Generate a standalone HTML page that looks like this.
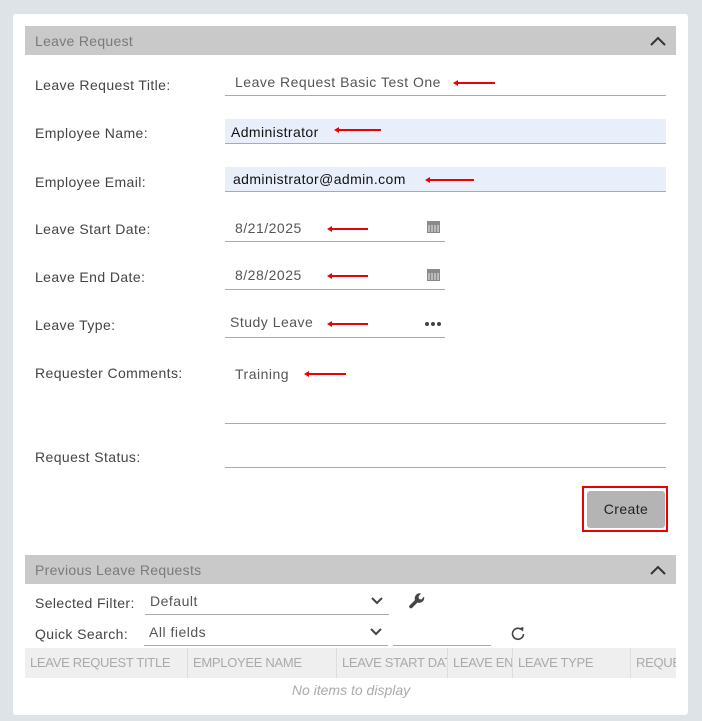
<!DOCTYPE html>
<html><head><style>
body{margin:0;width:702px;height:721px;background:#dde3e7;font-family:"Liberation Sans",sans-serif;position:relative;overflow:hidden}
.card{position:absolute;left:13px;top:14px;width:675px;height:701px;background:#fff;border-radius:3px}
.a{position:absolute;white-space:nowrap}
.hdr{position:absolute;left:25px;width:651px;height:29px;background:#c9c9c9}
.hdr span{position:absolute;left:10px;top:7px;font-size:14px;color:#7a7a7a;letter-spacing:0.3px}
.lbl{font-size:14px;color:#444;letter-spacing:0.4px}
.val{font-size:14px;color:#555;letter-spacing:0.5px}
.ln{position:absolute;height:1px;background:#aaa}
.arr{position:absolute;height:2px;background:#e00}
.arr:before{content:"";position:absolute;left:-3px;top:-2px;border-right:5px solid #e00;border-top:3px solid transparent;border-bottom:3px solid transparent}
.blue{position:absolute;background:#e8effa}
.cal{position:absolute;width:13px;height:12px;background:#8a8a8a}
.cal:after{content:"";position:absolute;left:1px;top:4px;width:11px;height:7px;background:repeating-linear-gradient(90deg,#bbb 0 2px,#8a8a8a 2px 3px)}
.th{position:absolute;top:648px;height:30px;background:#efefef;font-size:13px;color:#aaa;line-height:30px;overflow:hidden;white-space:nowrap;border-right:1px solid #ddd;padding-left:5px;box-sizing:border-box;letter-spacing:-0.3px}
.dot{position:absolute;width:4px;height:4px;border-radius:50%;background:#444}
</style></head><body>
<div class="card"></div>
<div class="hdr" style="top:26px"><span>Leave Request</span>
<svg style="position:absolute;left:624px;top:9px" width="18" height="12"><path d="M2 10 L9 3 L16 10" stroke="#333" stroke-width="2" fill="none"/></svg></div>

<div class="a lbl" style="left:35px;top:77px">Leave Request Title:</div>
<div class="a val" style="left:235px;top:74px">Leave Request Basic Test One</div>
<div class="arr" style="left:456px;top:82px;width:39px"></div>
<div class="ln" style="left:225px;top:95px;width:441px"></div>

<div class="blue" style="left:225px;top:119px;width:441px;height:24px"></div>
<div class="a lbl" style="left:35px;top:125px">Employee Name:</div>
<div class="a" style="left:231px;top:124px;font-size:14px;color:#111;letter-spacing:0.4px">Administrator</div>
<div class="arr" style="left:337px;top:129px;width:44px"></div>
<div class="ln" style="left:225px;top:143px;width:441px"></div>

<div class="blue" style="left:225px;top:167px;width:441px;height:24px"></div>
<div class="a lbl" style="left:35px;top:174px">Employee Email:</div>
<div class="a" style="left:233px;top:171px;font-size:14px;color:#111;letter-spacing:0.4px">administrator@admin.com</div>
<div class="arr" style="left:428px;top:179px;width:46px"></div>
<div class="ln" style="left:225px;top:191px;width:441px"></div>

<div class="a lbl" style="left:35px;top:221px">Leave Start Date:</div>
<div class="a val" style="left:235px;top:220px">8/21/2025</div>
<div class="arr" style="left:330px;top:228px;width:38px"></div>
<div class="cal" style="left:427px;top:221px"></div>
<div class="ln" style="left:225px;top:241px;width:220px"></div>

<div class="a lbl" style="left:35px;top:269px">Leave End Date:</div>
<div class="a val" style="left:235px;top:267px">8/28/2025</div>
<div class="arr" style="left:330px;top:275px;width:38px"></div>
<div class="cal" style="left:427px;top:269px"></div>
<div class="ln" style="left:225px;top:289px;width:220px"></div>

<div class="a lbl" style="left:35px;top:317px">Leave Type:</div>
<div class="a val" style="left:230px;top:314px">Study Leave</div>
<div class="arr" style="left:330px;top:323px;width:38px"></div>
<div class="dot" style="left:425px;top:322px"></div><div class="dot" style="left:431px;top:322px"></div><div class="dot" style="left:437px;top:322px"></div>
<div class="ln" style="left:225px;top:337px;width:220px"></div>

<div class="a lbl" style="left:35px;top:365px">Requester Comments:</div>
<div class="a val" style="left:235px;top:366px">Training</div>
<div class="arr" style="left:307px;top:373px;width:39px"></div>
<div class="ln" style="left:225px;top:423px;width:441px"></div>

<div class="a lbl" style="left:35px;top:449px">Request Status:</div>
<div class="ln" style="left:225px;top:467px;width:441px"></div>

<div style="position:absolute;left:582px;top:486px;width:82px;height:42px;border:2px solid #e00"></div>
<div style="position:absolute;left:587px;top:491px;width:78px;height:37px;background:#b4b4b4;border-radius:3px;font-size:14px;color:#222;text-align:center;line-height:37px;letter-spacing:0.4px">Create</div>

<div class="hdr" style="top:555px"><span>Previous Leave Requests</span>
<svg style="position:absolute;left:624px;top:9px" width="18" height="12"><path d="M2 10 L9 3 L16 10" stroke="#333" stroke-width="2" fill="none"/></svg></div>

<div class="a lbl" style="left:35px;top:595px">Selected Filter:</div>
<div class="a val" style="left:150px;top:593px">Default</div>
<svg style="position:absolute;left:371px;top:597px" width="12" height="8"><path d="M1 1 L6 6 L11 1" stroke="#444" stroke-width="2" fill="none"/></svg>
<div class="ln" style="left:145px;top:614px;width:244px"></div>
<svg style="position:absolute;left:408px;top:593px" width="18" height="18" viewBox="0 0 18 18"><path d="M16 3.5 a5 5 0 0 1 -6.5 6 L4 15 a1.8 1.8 0 0 1 -2.5 -2.5 L7 7 a5 5 0 0 1 6 -6.5 L10.5 3.5 L11 6 L13.5 6.5 Z" fill="#444"/></svg>

<div class="a lbl" style="left:35px;top:626px">Quick Search:</div>
<div class="a val" style="left:149px;top:624px">All fields</div>
<svg style="position:absolute;left:370px;top:628px" width="12" height="8"><path d="M1 1 L6 6 L11 1" stroke="#444" stroke-width="2" fill="none"/></svg>
<div class="ln" style="left:144px;top:645px;width:244px"></div>
<div class="ln" style="left:393px;top:645px;width:98px"></div>
<svg style="position:absolute;left:510px;top:625px" width="16" height="16" viewBox="0 0 16 16"><path d="M12 5 A5.5 5.5 0 1 0 13.5 9" stroke="#444" stroke-width="1.6" fill="none"/><path d="M9.5 3 L13.5 2 L13 6.5 Z" fill="#444"/></svg>

<div class="th" style="left:25px;width:163px">LEAVE REQUEST TITLE</div>
<div class="th" style="left:188px;width:149px">EMPLOYEE NAME</div>
<div class="th" style="left:337px;width:111px">LEAVE START DATE</div>
<div class="th" style="left:448px;width:65px">LEAVE END DATE</div>
<div class="th" style="left:513px;width:118px">LEAVE TYPE</div>
<div class="th" style="left:631px;width:45px;border-right:none">REQUESTER</div>
<div class="a" style="left:0;width:702px;text-align:center;top:682px;font-size:14px;color:#aaa;font-style:italic">No items to display</div>
</body></html>
